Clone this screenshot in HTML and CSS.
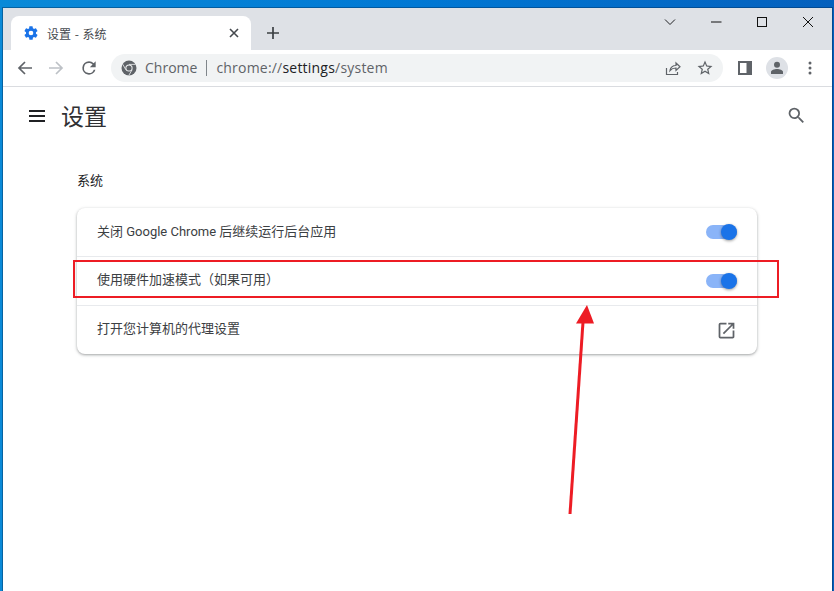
FILE: index.html
```html
<!DOCTYPE html>
<html lang="zh-CN">
<head>
<meta charset="utf-8">
<title>设置 - 系统</title>
<link rel="stylesheet" href="styles.css">
</head>
<body>
<div class="window">
  <div class="tabstrip">
    <div class="tab">
      <svg class="tab-gear" viewBox="0 0 24 24" width="16" height="16"><path fill="#1a73e8" d="M19.4 13c.04-.33.06-.66.06-1s-.02-.67-.07-1l2.1-1.65c.2-.15.25-.42.12-.64l-2-3.46c-.12-.22-.38-.3-.6-.22l-2.5 1c-.52-.4-1.08-.73-1.69-.98l-.38-2.65A.49.49 0 0 0 14 2h-4c-.25 0-.46.18-.49.42l-.38 2.65c-.61.25-1.17.59-1.69.98l-2.49-1a.5.5 0 0 0-.61.22l-2 3.46c-.13.22-.07.49.12.64L4.57 11c-.05.33-.07.66-.07 1s.02.67.07 1l-2.11 1.65c-.19.15-.25.42-.12.64l2 3.46c.12.22.38.3.61.22l2.49-1c.52.4 1.08.73 1.69.98l.38 2.65c.03.24.24.42.49.42h4c.25 0 .46-.18.49-.42l.38-2.65c.61-.25 1.17-.59 1.69-.98l2.49 1c.23.08.49 0 .61-.22l2-3.46c.12-.22.07-.49-.12-.64L19.4 13zM12 15.5a3.5 3.5 0 1 1 0-7 3.5 3.5 0 0 1 0 7z"/></svg>
      <span class="tab-title">设置 - 系统</span>
      <svg class="tab-close" viewBox="0 0 10 10" width="10" height="10"><path d="M1 1l8 8M9 1L1 9" stroke="#45494e" stroke-width="1.6" fill="none"/></svg>
    </div>
    <svg class="newtab" viewBox="0 0 12 12" width="12" height="12"><path d="M6 0v12M0 6h12" stroke="#3c4043" stroke-width="1.7" fill="none"/></svg>
    <div class="win-controls">
      <svg viewBox="0 0 12 12" width="12" height="12"><path d="M1 3.500L6 8.500l5-5" stroke="#202124" fill="none"/></svg>
      <svg viewBox="0 0 12 12" width="12" height="12"><path d="M1 6h10.500" stroke="#111" fill="none"/></svg>
      <svg viewBox="0 0 12 12" width="12" height="12"><rect x="1.500" y="1.500" width="9" height="9" stroke="#111" fill="none"/></svg>
      <svg viewBox="0 0 12 12" width="12" height="12"><path d="M1 1l10 10M11 1L1 11" stroke="#111" fill="none"/></svg>
    </div>
  </div>
  <div class="toolbar">
    <div class="nav">
      <svg viewBox="0 0 16 16" width="16" height="16"><path d="M15 8H2M8 2L2 8l6 6" stroke="#5f6368" stroke-width="1.700" fill="none"/></svg>
      <svg viewBox="0 0 16 16" width="16" height="16"><path d="M1 8h13M8 2l6 6-6 6" stroke="#bdc1c6" stroke-width="1.700" fill="none"/></svg>
      <svg viewBox="0 0 24 24" width="20" height="20"><path fill="#5f6368" d="M17.650 6.350A7.960 7.960 0 0 0 12 4a8 8 0 1 0 7.730 10h-2.080A6 6 0 1 1 12 6c1.660 0 3.140.69 4.220 1.780L13 11h7V4l-2.350 2.350z"/></svg>
    </div>
    <div class="omnibox">
      <svg class="chrome-logo" viewBox="0 0 16 16" width="16" height="16"><circle cx="8" cy="8" r="7.500" fill="#5f6368"/><circle cx="8" cy="8" r="3.600" fill="#f1f3f4"/><circle cx="8" cy="8" r="2.600" fill="#5f6368"/><path d="M8 4.400h6.500M4.900 9.800L1.700 4.200M11.100 9.800L7.800 15.400" stroke="#f1f3f4" stroke-width="0.800"/></svg>
      <span class="omni-chip">Chrome</span>
      <span class="omni-sep"></span>
      <span class="omni-url"><span class="dim">chrome://</span>settings<span class="dim">/system</span></span>
      <svg class="omni-share" viewBox="0 0 16 16" width="16" height="16"><path d="M1.500 8v6.500h11V12M5 10.500c.5-3 2.800-5 6-5V3l4 3.800-4 3.700V8c-2.600 0-4.500.7-6 2.500z" stroke="#5f6368" stroke-width="1.200" fill="none"/></svg>
      <svg class="omni-star" viewBox="0 0 24 24" width="18" height="18"><path fill="#5f6368" d="M22 9.240l-7.190-.62L12 2 9.190 8.630 2 9.240l5.460 4.730L5.820 21 12 17.270 18.180 21l-1.630-7.030L22 9.240zM12 15.400l-3.760 2.270 1-4.280-3.320-2.880 4.380-.38L12 6.100l1.710 4.040 4.380.38-3.320 2.880 1 4.280L12 15.400z"/></svg>
    </div>
    <div class="tools">
      <svg viewBox="0 0 14 14" width="14" height="14"><rect width="14" height="14" fill="#5f6368"/><rect x="2" y="2" width="6.500" height="10" fill="#fff"/></svg>
      <span class="avatar"><svg viewBox="0 0 14 14" width="14" height="14"><circle cx="7" cy="3.800" r="3" fill="#5f6368"/><path d="M1 13v-2c0-2 3.500-3 6-3s6 1 6 3v2z" fill="#5f6368"/></svg></span>
      <svg viewBox="0 0 4 14" width="4" height="14"><circle cx="2" cy="2" r="1.500" fill="#5f6368"/><circle cx="2" cy="7" r="1.500" fill="#5f6368"/><circle cx="2" cy="12" r="1.500" fill="#5f6368"/></svg>
    </div>
  </div>
  <div class="page">
    <header class="page-head">
      <svg class="menu" viewBox="0 0 16 12" width="16" height="12"><path d="M0 1h16M0 6h16M0 11h16" stroke="#202124" stroke-width="2" fill="none"/></svg>
      <h1 class="page-title">设置</h1>
      <svg class="search" viewBox="0 0 24 24" width="21" height="21"><path fill="#5f6368" d="M15.500 14h-.79l-.28-.27A6.470 6.470 0 0 0 16 9.500 6.500 6.500 0 1 0 9.500 16c1.610 0 3.090-.59 4.230-1.570l.27.28v.79l5 4.990L20.490 19l-4.990-5zm-6 0C7.010 14 5 11.990 5 9.500S7.010 5 9.500 5 14 7.010 14 9.500 11.990 14 9.500 14z"/></svg>
    </header>
    <main class="content">
      <h2 class="section-title">系统</h2>
      <section class="card">
        <div class="row"><span class="row-label">关闭 Google Chrome 后继续运行后台应用</span><span class="toggle"></span></div>
        <div class="row"><span class="row-label">使用硬件加速模式（如果可用）</span><span class="toggle"></span></div>
        <div class="row"><span class="row-label">打开您计算机的代理设置</span>
          <svg class="ext" viewBox="0 0 24 24" width="21" height="21"><path fill="#5f6368" d="M19 19H5V5h7V3H5a2 2 0 0 0-2 2v14a2 2 0 0 0 2 2h14c1.100 0 2-.9 2-2v-7h-2v7zM14 3v2h3.590l-9.830 9.830 1.410 1.410L19 6.410V10h2V3h-7z"/></svg>
        </div>
      </section>
    </main>
  </div>
</div>
<div class="highlight"></div>
<svg class="arrow" viewBox="0 0 50 220" width="50" height="220"><path d="M17 212L30 20" stroke="#ed1c24" stroke-width="3" fill="none"/><path d="M34 3L23 21.500L41 21.500z" fill="#ed1c24"/></svg>
</body>
</html>
```

FILE: styles.css
```css
* { box-sizing: border-box; }
html, body { margin: 0; height: 100%; overflow: hidden; }
body {
  background: linear-gradient(90deg, #0a8ad8 0%, #0078d4 50%, #0560bd 100%);
  padding: 8px 2px 0 3px;
  font-family: Roboto, "Noto Sans CJK SC", sans-serif;
  color: #202124;
}
.window { height: 583px; display: flex; flex-direction: column; background: #fff; box-shadow: 0 0 0 1px rgba(0,40,80,.4); }

.tabstrip { height: 42px; background: #dee1e6; display: flex; align-items: flex-end; padding-left: 8px; flex: none; }
.tab {
  width: 240px; height: 34px; background: #fff; border-radius: 8px 8px 0 0;
  display: flex; align-items: center; padding: 0 12px;
}
.tab-title { margin-left: 8px; font: 12px "Noto Sans CJK SC", sans-serif; word-spacing: 1px; color: #45494e; flex: 1; }
.newtab { margin: 0 0 11px 16px; }
.win-controls { margin-left: auto; align-self: flex-start; display: flex; gap: 34px; padding: 8px 18px 0 0; }
.win-controls svg { display: block; }

.toolbar { height: 37px; flex: none; border-bottom: 1px solid #dadce0; display: flex; align-items: center; padding-bottom: 1px; }
.nav { display: flex; align-items: center; width: 108px; padding-left: 14px; gap: 15px; flex: none; }
.omnibox {
  width: 612px; height: 28px; border-radius: 14px; background: #f1f3f4; display: flex; align-items: center;
  padding: 0 9px 0 10px; font: 14px "Open Sans", sans-serif; flex: none;
}
.omni-chip { margin-left: 8px; color: #5f6368; }
.omni-sep { width: 1px; height: 16px; background: #80868b; margin: 0 9px 0 9px; }
.omni-url { flex: 1; color: #202124; letter-spacing: .21px; }
.dim { color: #5f6368; }
.omni-share { margin-right: 15px; }
.tools { display: flex; align-items: center; padding-left: 15px; flex: none; }
.avatar { width: 22px; height: 22px; border-radius: 50%; background: #dee1e6; display: flex; align-items: center; justify-content: center; margin: 0 20px 0 14px; }

.page { flex: 1; }
.page-head { height: 56px; display: flex; align-items: center; padding: 0 25px 0 26px; }
.menu { margin-top: 2px; }
.page-title { font: 400 23px/1 "Noto Sans CJK SC", sans-serif; margin: 0 0 0 16px; flex: 1; color: #303134; }
.search { margin-top: 1px; }
.content { margin-left: 74px; width: 680px; }
.section-title { font: 400 13px/38px "Noto Sans CJK SC", sans-serif; margin: 0; padding-top: 18px; height: 65px; color: #202124; }
.card { height: 146px; border-radius: 8px; background: #fff; box-shadow: 0 1px 2px rgba(60,64,67,.3), 0 1px 3px 1px rgba(60,64,67,.15); }
.row {
  height: 49px; padding: 0 19px 0 20px; display: flex; align-items: center; justify-content: space-between;
  font-size: 13px; color: #3c4043; border-top: 1px solid #e8eaed;
}
.row:first-child { border-top: 0; height: 48px; }
.row-label { margin-top: -4px; }
.row + .row .row-label { margin-top: -6px; }
.toggle { width: 31px; height: 14px; border-radius: 7px; background: #8ab4f8; position: relative; margin-right: 1px; }
.toggle::after {
  content: ""; position: absolute; width: 16px; height: 16px; border-radius: 50%; background: #1a73e8;
  right: 0; top: -1px; box-shadow: 0 1px 3px rgba(0,0,0,.4);
}
.ext { margin-right: 1px; }

.highlight { position: absolute; left: 73px; top: 260px; width: 706px; height: 38px; border: 2px solid #ed1c24; }
.arrow { position: absolute; left: 553px; top: 302px; }
```
